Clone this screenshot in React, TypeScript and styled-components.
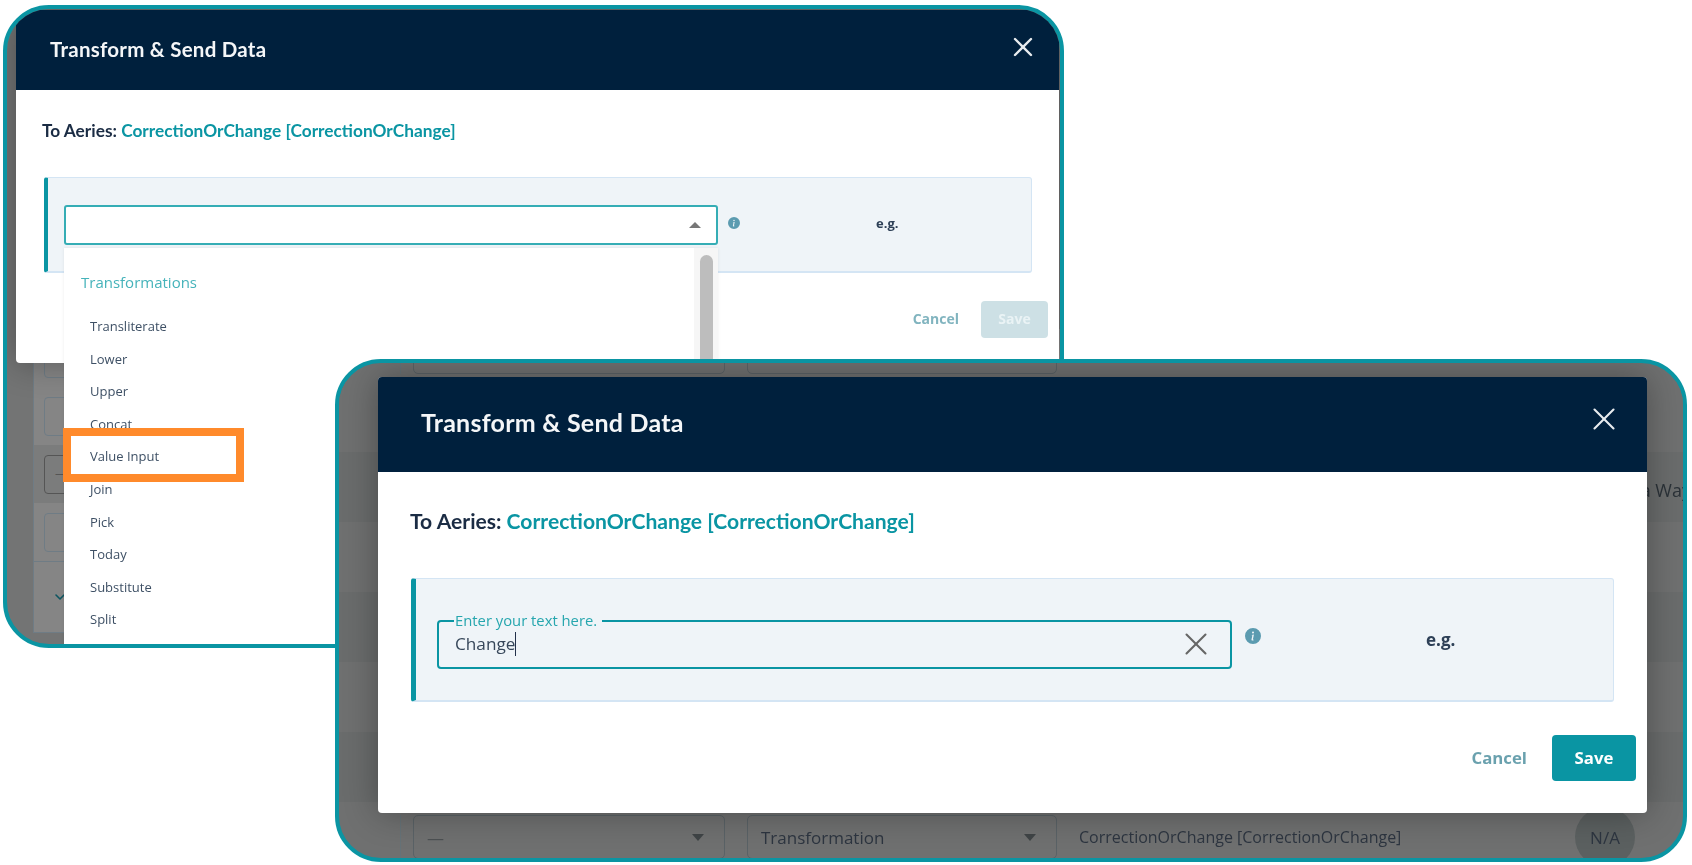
import * as React from 'react';
import styled, { createGlobalStyle } from 'styled-components';
import { X, ChevronDown } from 'lucide-react';
import { BsInfoCircleFill } from 'react-icons/bs';

interface SizeProps {
  $large?: boolean;
}

const TEAL = '#0a95a3';
const NAVY = '#00203d';
const by =
  (small: string, large: string) =>
  ({ $large }: SizeProps) =>
    $large ? large : small;

const transformations = [
  'Transliterate',
  'Lower',
  'Upper',
  'Concat',
  'Value Input',
  'Join',
  'Pick',
  'Today',
  'Substitute',
  'Split',
];

function ModalContent({ large, children, saveDisabled }: { large?: boolean; children: React.ReactNode; saveDisabled?: boolean }) {
  return (
    <Modal $large={large}>
      <Header $large={large}>
        <Title $large={large}>Transform &amp; Send Data</Title>
        <CloseButton $large={large}>
          <X size={large ? 38 : 32} strokeWidth={large ? 1.3 : 1.8} />
        </CloseButton>
      </Header>
      <Body $large={large}>
        <Target $large={large}>
          To Aeries: <TargetName>CorrectionOrChange [CorrectionOrChange]</TargetName>
        </Target>
        <Panel $large={large}>
          {children}
          <InfoIcon $large={large}>
            <BsInfoCircleFill size={large ? 16 : 12} />
          </InfoIcon>
          <Example $large={large}>e.g.</Example>
        </Panel>
        <Footer $large={large}>
          <CancelButton $large={large}>Cancel</CancelButton>
          <SaveButton $large={large} $disabled={saveDisabled}>
            Save
          </SaveButton>
        </Footer>
      </Body>
    </Modal>
  );
}

export default function App() {
  return (
    <>
      <GlobalStyle />
      <Canvas>
        <FirstFrame>
          <FirstBackdrop>
            {[0, 1, 2, 3].map(i => (
              <FirstRow key={i} $shade={i === 2}>
                <FirstCell>
                  <GhostBox $strong={i === 2}>{i === 2 && '—'}</GhostBox>
                </FirstCell>
              </FirstRow>
            ))}
            <ChevronRow>
              <FirstCell>
                <ChevronDown size={16} strokeWidth={2.4} />
              </FirstCell>
            </ChevronRow>
          </FirstBackdrop>
          <ModalContent saveDisabled>
            <SelectField>
              <UpCaret />
              <Dropdown>
                <DropdownList>
                  <GroupLabel>Transformations</GroupLabel>
                  {transformations.map(item => (
                    <DropdownItem key={item}>{item}</DropdownItem>
                  ))}
                </DropdownList>
                <ScrollTrack>
                  <ScrollThumb />
                </ScrollTrack>
                <Highlight />
              </Dropdown>
            </SelectField>
          </ModalContent>
        </FirstFrame>
        <SecondFrame>
          <SecondBackdrop>
            <TopStrip>
              <SecondCell>
                <DimSelect />
                <DimSelect $wide />
              </SecondCell>
            </TopStrip>
            <BandRow />
            <BandRow $dark>
              <CutText>a Way</CutText>
            </BandRow>
            <BandRow />
            <BandRow $dark />
            <BandRow />
            <BandRow $dark />
            <LastRow>
              <SecondCell>
                <DimSelect>
                  <DimDash>—</DimDash>
                  <DownCaret />
                </DimSelect>
                <DimSelect $wide>
                  Transformation
                  <DownCaret />
                </DimSelect>
                <DimValue>CorrectionOrChange [CorrectionOrChange]</DimValue>
                <Badge>N/A</Badge>
              </SecondCell>
            </LastRow>
          </SecondBackdrop>
          <ModalContent large>
            <TextField>
              <FieldLegend>Enter your text here.</FieldLegend>
              <FieldValue>
                <TypedText>Change</TypedText>
                <ClearIcon>
                  <X size={38} strokeWidth={1.3} />
                </ClearIcon>
              </FieldValue>
            </TextField>
          </ModalContent>
        </SecondFrame>
      </Canvas>
    </>
  );
}

const GlobalStyle = createGlobalStyle`
  html, body {
    margin: 0;
    background: #fff;
    font-family: "Open Sans", "Liberation Sans", sans-serif;
  }
`;

const Canvas = styled.div`
  position: relative;
  width: 1692px;
  height: 865px;
  overflow: hidden;
  background: #fff;
`;

const Frame = styled.div`
  position: absolute;
  box-sizing: border-box;
  border: 4px solid ${TEAL};
  border-radius: 46px;
  overflow: hidden;
  background: #737474;
`;

const FirstFrame = styled(Frame)`
  left: 3px;
  top: 5px;
  width: 1061px;
  height: 643px;
  padding: 1px 0 0 9px;
  filter: blur(0.5px);
`;

const SecondFrame = styled(Frame)`
  left: 335px;
  top: 359px;
  width: 1352px;
  height: 503px;
  padding: 14px 0 0 39px;
  background: #6f7070;
  filter: blur(0.3px);
`;

const FirstBackdrop = styled.div`
  position: absolute;
  inset: 320px 0 0 26px;
  display: flex;
  flex-direction: column;
`;

const FirstRow = styled.div<{ $shade?: boolean }>`
  flex: 0 0 58px;
  display: flex;
  background: ${p => (p.$shade ? '#7b7c7c' : '#858585')};
`;

const FirstCell = styled.div`
  flex: 1;
  display: flex;
  align-items: center;
  padding-left: 10px;
  border-left: 1px solid #6f7c85;
  color: #0d5560;
`;

const ChevronRow = styled.div`
  flex: 0 0 72px;
  display: flex;
  background: #858585;
  border-top: 1px solid #6f7c85;
  border-bottom: 1px solid #6f7c85;
  box-sizing: border-box;

  ${FirstCell} {
    padding-left: 18px;
  }
`;

const GhostBox = styled.div<{ $strong?: boolean }>`
  width: 200px;
  height: 39px;
  box-sizing: border-box;
  padding: 8px 10px;
  border: 1px solid ${p => (p.$strong ? '#555' : '#6f7c85')};
  border-radius: 4px;
  color: #555;
  font-size: 13px;
`;

const SecondBackdrop = styled.div`
  position: absolute;
  inset: 0;
  display: flex;
  flex-direction: column;
`;

const TopStrip = styled.div`
  flex: 0 0 19px;
  display: flex;
  align-items: flex-end;
  padding-bottom: 8px;
  overflow: hidden;
  box-sizing: border-box;
`;

const BandRow = styled.div<{ $dark?: boolean }>`
  flex: 0 0 70px;
  display: flex;
  justify-content: flex-end;
  align-items: center;
  background: ${p => (p.$dark ? '#6a6c6c' : '#6f7070')};
`;

const CutText = styled.span`
  margin: 6px -8px 0 0;
  font-size: 18px;
  color: #2b3238;
`;

const LastRow = styled.div`
  flex: 0 0 70px;
  display: flex;
  padding-top: 13px;
  box-sizing: border-box;
`;

const SecondCell = styled.div`
  flex: 1;
  display: flex;
  align-items: stretch;
  gap: 22px;
  height: 44px;
  margin-left: 61px;
  padding-left: 12px;
  border-left: 1px solid #667277;
`;

const DimSelect = styled.div<{ $wide?: boolean }>`
  flex: 0 0 ${p => (p.$wide ? '310px' : '312px')};
  box-sizing: border-box;
  display: flex;
  align-items: center;
  justify-content: space-between;
  padding: 0 13px;
  border: 1px solid #5a6266;
  border-radius: 5px;
  color: #2d3540;
  font-size: 17px;
`;

const DimDash = styled.span`
  color: #4c5052;
`;

const DownCaret = styled.span`
  width: 0;
  height: 0;
  border-left: 6px solid transparent;
  border-right: 6px solid transparent;
  border-top: 7px solid #3f4446;
  margin-right: 7px;
`;

const DimValue = styled.div`
  display: flex;
  align-items: center;
  color: #2d3540;
  font-size: 16px;
`;

const Badge = styled.div`
  flex: 0 0 60px;
  margin: -8px 48px 0 auto;
  height: 60px;
  display: flex;
  align-items: center;
  justify-content: center;
  border-radius: 50%;
  background: #5b6060;
  color: #2d3540;
  font-size: 17px;
`;

const Modal = styled.div<SizeProps>`
  position: relative;
  box-sizing: border-box;
  width: ${by('1043px', '1269px')};
  height: ${by('353px', '436px')};
  background: #fff;
  border-radius: 4px;
  box-shadow: 0 0 34px rgba(0, 0, 0, 0.32);
`;

const Header = styled.div<SizeProps>`
  display: flex;
  justify-content: space-between;
  align-items: center;
  box-sizing: border-box;
  height: ${by('80px', '95px')};
  padding: 0 ${by('20px', '24px')} 0 ${by('34px', '43px')};
  background: ${NAVY};
  border-radius: 4px 4px 0 0;
`;

const Title = styled.div<SizeProps>`
  margin-top: ${by('-2px', '-5px')};
  color: #f4f6f8;
  font-family: Lato, "Open Sans", sans-serif;
  font-weight: 700;
  font-size: ${by('20.5px', '25px')};
  letter-spacing: 0.25px;
`;

const CloseButton = styled.div<SizeProps>`
  display: flex;
  color: #e8ecef;
  margin-top: ${by('-7px', '-11px')};
`;

const Body = styled.div<SizeProps>`
  padding: ${by('31px', '36px')} 0 0 ${by('26px', '32px')};
`;

const Target = styled.div<SizeProps>`
  color: #1b2c44;
  font-family: Lato, "Open Sans", sans-serif;
  font-weight: 700;
  font-size: ${by('17.3px', '21.1px')};
  line-height: ${by('20px', '26px')};
`;

const TargetName = styled.span`
  color: ${TEAL};
`;

const Panel = styled.div<SizeProps>`
  display: flex;
  align-items: flex-start;
  box-sizing: border-box;
  width: ${by('988px', '1203px')};
  height: ${by('96px', '124px')};
  margin: ${by('36px', '44px')} 0 0 ${by('2px', '1px')};
  padding: ${by('27px', '34px')} 0 0 ${by('16px', '21px')};
  background: #eff4f8;
  border: 1px solid #d4e5f4;
  border-bottom-width: 2px;
  border-left: ${by('4px', '5px')} solid ${TEAL};
  border-radius: 3px;
`;

const SelectField = styled.div`
  position: relative;
  flex: 0 0 654px;
  box-sizing: border-box;
  height: 40px;
  background: #fff;
  border: 2px solid #35adb5;
  border-radius: 3px;
`;

const UpCaret = styled.span`
  position: absolute;
  right: 15px;
  top: 15px;
  width: 0;
  height: 0;
  border-left: 6px solid transparent;
  border-right: 6px solid transparent;
  border-bottom: 6px solid #777;
`;

const Dropdown = styled.div`
  position: absolute;
  left: -2px;
  top: 41px;
  width: 654px;
  height: 600px;
  display: flex;
  background: #fff;
  box-shadow: 0 0 3px rgba(0, 0, 0, 0.08);
`;

const DropdownList = styled.div`
  flex: 1;
  padding: 24px 0 0 17px;
`;

const GroupLabel = styled.div`
  color: #45b3ba;
  font-size: 15px;
  line-height: 20px;
  margin-bottom: 18px;
`;

const DropdownItem = styled.div`
  height: 32.6px;
  line-height: 32.6px;
  padding-left: 9px;
  color: #3e5065;
  font-size: 13px;
`;

const ScrollTrack = styled.div`
  flex: 0 0 24px;
  box-sizing: border-box;
  padding: 7px 5px 0 6px;
  background: #f6f6f6;
`;

const ScrollThumb = styled.div`
  height: 400px;
  background: #bdbdbd;
  border-radius: 7px;
`;

const Highlight = styled.div`
  position: absolute;
  left: -1px;
  top: 180px;
  width: 181px;
  height: 54px;
  box-sizing: border-box;
  border: 8px solid #ff8a2b;
`;

const TextField = styled.fieldset`
  flex: 0 0 795px;
  box-sizing: border-box;
  height: 56px;
  margin: 0;
  padding: 0 16px;
  border: 2.5px solid ${TEAL};
  border-radius: 4px;
  min-width: 0;
`;

const FieldLegend = styled.legend`
  margin-left: -1px;
  padding: 0 5px 0 1px;
  color: #26a6ae;
  font-size: 14.8px;
  line-height: 15px;
`;

const FieldValue = styled.div`
  display: flex;
  align-items: center;
  justify-content: space-between;
  height: 31px;
`;

const TypedText = styled.span`
  color: #37475a;
  font-size: 17.2px;
  line-height: 24px;
  border-right: 1.5px solid #22304a;
`;

const ClearIcon = styled.span`
  display: flex;
  color: #666;
  margin-right: -1px;
`;

const InfoIcon = styled.span<SizeProps>`
  display: flex;
  margin: ${by('12px', '15px')} 0 0 ${by('10px', '13px')};
  color: #5b9bb0;
`;

const Example = styled.span<SizeProps>`
  margin: ${by('9px', '15px')} 0 0 ${by('136px', '165px')};
  color: #2e4057;
  font-weight: 700;
  font-size: ${by('13px', '17px')};
`;

const Footer = styled.div<SizeProps>`
  display: flex;
  justify-content: flex-end;
  align-items: center;
  gap: ${by('22px', '25px')};
  margin-top: ${by('28px', '33px')};
  padding-right: 11px;
`;

const CancelButton = styled.span<SizeProps>`
  padding-bottom: 2px;
  color: ${by('#81b4bf', '#6aa1ae')};
  font-weight: 700;
  font-size: ${by('14px', '16.8px')};
`;

const SaveButton = styled.span<SizeProps & { $disabled?: boolean }>`
  display: flex;
  align-items: center;
  justify-content: center;
  box-sizing: border-box;
  padding-bottom: 2px;
  width: ${by('67px', '84px')};
  height: ${by('37px', '46px')};
  border-radius: 4px;
  background: ${p => (p.$disabled ? '#cde0e5' : TEAL)};
  color: ${p => (p.$disabled ? '#eaf3f5' : '#fff')};
  font-weight: 700;
  font-size: ${by('14px', '16.8px')};
`;
